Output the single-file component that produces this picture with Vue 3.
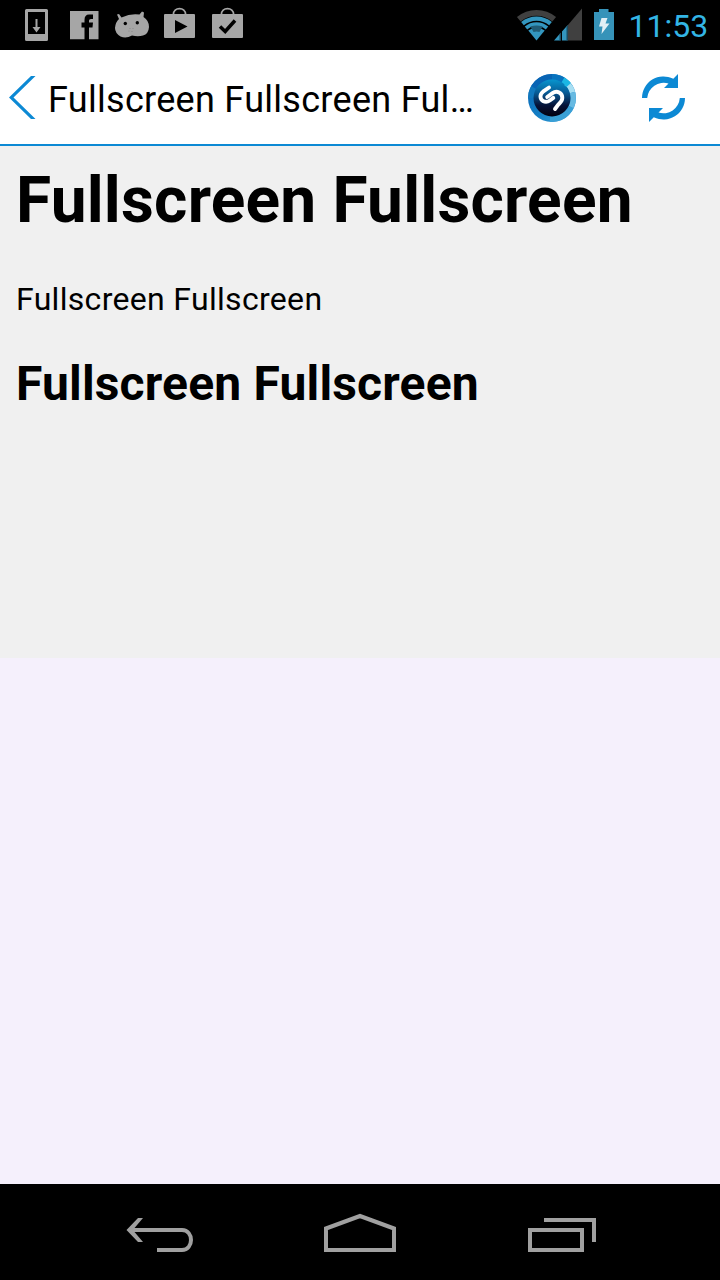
<script setup>
const title = 'Fullscreen Fullscreen Ful…'
</script>

<template>
  <div class="screen">
    <header class="status">
      <svg class="notifications" width="250" height="50" viewBox="0 0 250 50" fill="#a6a6a6">
        <path fill-rule="evenodd" d="M26.500 9H46.500Q48 9 48 10.500V39.500Q48 41 46.500 41H26.500Q25 41 25 39.500V10.500Q25 9 26.500 9ZM28 12V34H45V12Z" />
        <path d="M35.500 19H37.500V27H40.500L36.500 32.500L32.500 27H35.500Z" />
        <path fill-rule="evenodd" d="M70 11H98.500V39.300H70ZM81.500 22.500V27.500H84.500V39.300H89V27.500H92.500L93 22.500H89V20.500Q89 19 91 19H93V14.500H89Q84.500 14.500 84.500 20V22.500Z" />
        <path d="M117 14.500L119 14L121.500 17.500Q131 13 139.500 14.500L142 11.500L144 12.500L143.500 17Q149 20.500 149 27Q148.500 34 143 35.500Q138 37 132 35.500Q126 39 120.500 36.500Q115 33 115 28Q115.500 22 119 19Z" />
        <g fill="#000">
          <circle cx="125.300" cy="23.500" r="1.700" />
          <circle cx="137.300" cy="22.700" r="1.700" />
        </g>
        <g fill="#878787">
          <circle cx="130" cy="28.500" r=".6" /><circle cx="133" cy="28.500" r=".6" />
          <circle cx="129" cy="31" r=".6" /><circle cx="132" cy="31.500" r=".6" />
        </g>
        <g v-for="x in [164, 212]" :key="x" :transform="`translate(${x} 0)`">
          <path d="M1 14H30Q31 14 31 15V37Q31 38 30 38H1Q0 38 0 37V15Q0 14 1 14Z" />
          <path d="M9.300 15C9.300 6.400 21.700 6.400 21.700 15" fill="none" stroke="#a6a6a6" stroke-width="1.800" />
        </g>
        <path fill="#000" d="M175 20L187.500 26.500L175 33Z" />
        <path fill="none" stroke="#000" stroke-width="3.500" d="M220 26.500L225.200 31.500L235 20.500" />
      </svg>
      <div class="system">
        <svg width="104" height="50" viewBox="514 0 104 50">
          <g fill="none">
            <path stroke="#404040" stroke-width="5.800" d="M518.800 19.200A27.700 27.700 0 0 1 554.200 19.200" />
            <path stroke="#3396bf" stroke-width="4.200" d="M522.500 23.700A21.900 21.900 0 0 1 550.500 23.700" />
            <path stroke="#3396bf" stroke-width="3.800" d="M526 28A16.400 16.400 0 0 1 547 28" />
          </g>
          <path fill="#3396bf" d="M528.300 30.600A12.800 12.800 0 0 1 544.700 30.600L536.500 40.500Z" />
          <path fill="#205c76" d="M530.500 26.500Q536.500 24.500 542.500 26.500L539.500 32Q536.500 30.800 533.500 32Z" />
          <path fill="#404040" d="M567.500 25.500L582 8.500V40.500H567.500Z" />
          <path fill="#3396bf" d="M554 40.500L560.500 33V40.500ZM562 31.500L567.500 25.300V40.500H562Z" />
          <path fill="#1d4c60" d="M559.500 34L561 32.500V40.500H559.500ZM566.500 26.300L568 25V40.500H566.500Z" />
          <path fill="#3693b9" d="M599 9H608.500V12H614V40H594V12H599Z" />
          <path fill="#e1eff5" d="M601.500 18H607.500L605.500 23.500H609.500L601.500 34L602.500 26.500H599Z" />
        </svg>
        <time class="clock">11:53</time>
      </div>
    </header>

    <nav class="action-bar">
      <svg class="back" width="48" height="94" viewBox="0 50 48 94">
        <path d="M31 76H35.500L13.500 97.500L35.500 119H31L9 97.500Z" fill="#0c89d4" />
      </svg>
      <div class="title">{{ title }}</div>
      <div class="actions">
        <svg width="56" height="94" viewBox="524 50 56 94">
          <defs>
            <linearGradient id="disc" x1="0" y1="0" x2="0" y2="1">
              <stop offset="0" stop-color="#0795ce" />
              <stop offset=".35" stop-color="#075c97" />
              <stop offset=".7" stop-color="#061237" />
              <stop offset="1" stop-color="#03000f" />
            </linearGradient>
            <linearGradient id="ring" x1="0" y1="0" x2="1" y2="1">
              <stop offset="0" stop-color="#0865b5" />
              <stop offset=".55" stop-color="#147fc5" />
              <stop offset="1" stop-color="#43a9dc" />
            </linearGradient>
          </defs>
          <circle cx="552" cy="98" r="24" fill="url(#ring)" />
          <g fill="none" stroke-width="5.500">
            <path d="M530.800 98A21.200 21.200 0 0 1 533.600 87.400" stroke="#1178bd" />
            <path d="M533.600 87.400A21.200 21.200 0 0 1 552 76.800" stroke="#0864b4" />
            <path d="M552 76.800A21.200 21.200 0 0 1 563 79.900" stroke="#0873be" />
            <path d="M563 79.900A21.200 21.200 0 0 1 568 84.100" stroke="#1cb7e4" />
            <path d="M568 84.100A21.200 21.200 0 0 1 572.500 92.500" stroke="#a8dff3" />
            <path d="M572.500 92.500A21.200 21.200 0 0 1 571 107" stroke="#67bae2" />
            <path d="M571 107A21.200 21.200 0 0 1 550 119.100" stroke="#3aa0d6" />
          </g>
          <circle cx="552" cy="98" r="18.500" fill="url(#disc)" />
          <path d="M564 85L568.500 80.800L571 83L566.500 87Z" fill="#1cb7e4" />
          <g fill="none" stroke="#fff" stroke-width="3.900" stroke-linecap="round">
            <path d="M549 87.500L543 91.700C539.300 94.500 540 99.300 543 101C545.700 102.500 548 101.800 549.800 100.500L553.300 97.900" />
            <path d="M547.200 97L552.500 93.100C557 90 562.500 93 562.300 98C562.200 101.500 560 103 558.300 104.600L555 109" />
          </g>
        </svg>
        <svg width="60" height="94" viewBox="634 50 60 94">
          <path fill="#0c89d4" d="M642 98A21.500 21.500 0 0 1 673.300 78.800L678 74V88H664L668.500 83.500A16.500 16.500 0 0 0 647.200 98Z" />
          <path fill="#0c89d4" d="M685 98A21.500 21.500 0 0 1 653.800 117.200L649 122V108H663L658.500 112.600A16.500 16.500 0 0 0 679.800 98Z" />
        </svg>
      </div>
    </nav>

    <main class="page">
      <article class="document">
        <h1>Fullscreen Fullscreen</h1>
        <p>Fullscreen Fullscreen</p>
        <h2>Fullscreen Fullscreen</h2>
      </article>
    </main>

    <footer class="navigation">
      <svg width="720" height="96" viewBox="0 1184 720 96" fill="none" stroke="#a0a0a0" stroke-width="4">
        <path d="M130 1230H182C194 1230 194 1250 182 1250H157" />
        <path fill="#a0a0a0" stroke="none" d="M138 1218H143L132.800 1230L143 1242H138L126.500 1230Z" />
        <path d="M326 1228.500L360 1216L394 1228.500V1250H326Z" />
        <path d="M530 1230H582V1250H530ZM544 1220H594V1242" />
      </svg>
    </footer>
  </div>
</template>

<style>
body { margin: 0; }
</style>

<style scoped>
.screen {
  width: 720px;
  height: 1280px;
  display: flex;
  flex-direction: column;
  overflow: hidden;
  background: #f5f0fc;
  color: #000;
  font-family: Roboto, sans-serif;
}
svg { display: block; flex: none; }
.status {
  height: 50px;
  display: flex;
  justify-content: space-between;
  background: #000;
}
.system { display: flex; width: 206px; }
.clock {
  margin-left: 10.500px;
  line-height: 52px;
  font-size: 32px;
  color: #33b5e5;
  white-space: nowrap;
}
.action-bar {
  box-sizing: border-box;
  height: 96px;
  display: flex;
  background: #fff;
  border-bottom: 2px solid #0c89d4;
}
.title {
  width: 476px;
  line-height: 100px;
  font-size: 36px;
  letter-spacing: .29px;
  white-space: nowrap;
}
.actions { display: flex; gap: 54px; }
.page { flex: 1; }
.document {
  height: 512px;
  box-sizing: border-box;
  padding: 17px 16px 16px;
  background: #f0f0f0;
}
h1, h2, p { margin: 0; white-space: nowrap; }
h1 { font-size: 64px; line-height: 76px; letter-spacing: .21px; }
p { margin-top: 41px; font-size: 32px; line-height: 38px; letter-spacing: .31px; }
h2 { margin-top: 38px; font-size: 48px; line-height: 56px; letter-spacing: .17px; }
.navigation { height: 96px; background: #000; }
</style>
